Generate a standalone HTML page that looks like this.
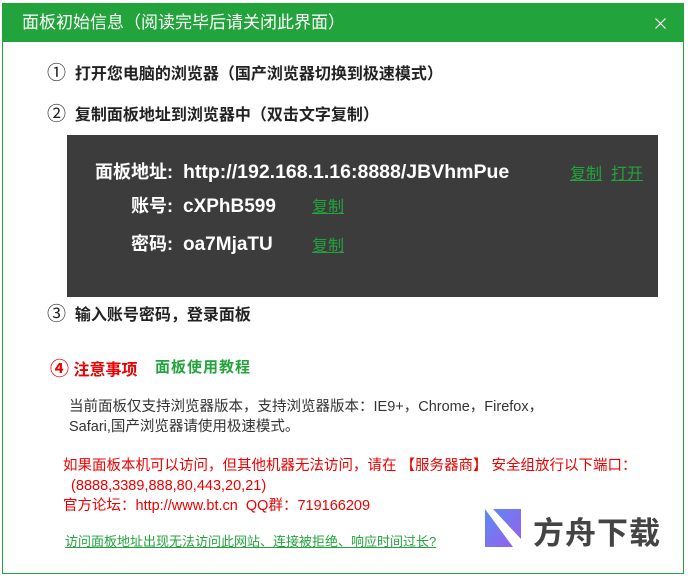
<!DOCTYPE html>
<html><head><meta charset="utf-8"><style>
body{margin:0;width:688px;height:578px;background:#fff;font-family:"Liberation Sans","Noto Sans CJK SC",sans-serif;position:relative;overflow:hidden}
.win{position:absolute;left:2px;top:3px;width:680px;height:569px;border:1px solid #22a33c;background:#fff}
.title{position:absolute;left:0;top:0;width:680px;height:38px;background:#22a33c;color:#fff;font-size:17px;line-height:38px}
.a{position:absolute;white-space:nowrap}
.b{font-weight:bold;font-size:16px;color:#222}
.panel{position:absolute;left:67px;top:135px;width:591px;height:162px;background:#3c3c3c}
.w{color:#fff;font-weight:bold;font-size:18px}
.g{color:#22a33c;text-decoration:underline;font-size:16px}
.r{color:#e00;font-size:14px}
.n{font-weight:normal;font-size:19px}
</style></head><body>
<div class="win">
<div class="title"><span style="position:absolute;left:19px">面板初始信息（阅读完毕后请关闭此界面）</span><svg style="position:absolute;left:652px;top:14px" width="11" height="11"><path d="M0.5 0.5L10.5 10.5M10.5 0.5L0.5 10.5" stroke="#fff" stroke-width="1.2"/></svg></div>
</div>
<div class="a b" style="left:47px;top:58px"><span class="n">①</span>&nbsp; 打开您电脑的浏览器（国产浏览器切换到极速模式）</div>
<div class="a b" style="left:47px;top:99px"><span class="n">②</span>&nbsp; 复制面板地址到浏览器中（双击文字复制）</div>
<div class="panel"></div>
<div class="a w" style="left:95px;top:158px">面板地址:&nbsp; <span style="font-size:19.5px">http://192.168.1.16:8888/JBVhmPue</span></div>
<div class="a g" style="left:570px;top:160px">复制</div>
<div class="a g" style="left:611px;top:160px">打开</div>
<div class="a w" style="left:131px;top:192px">账号:&nbsp; <span style="font-size:19px">cXPhB599</span></div>
<div class="a g" style="left:312px;top:193px">复制</div>
<div class="a w" style="left:131px;top:230px">密码:&nbsp; <span style="font-size:19px">oa7MjaTU</span></div>
<div class="a g" style="left:312px;top:232px">复制</div>
<div class="a b" style="left:47px;top:299px"><span class="n">③</span>&nbsp; 输入账号密码，登录面板</div>
<div class="a" style="left:50px;top:354px;font-size:16px;font-weight:bold;color:#e00"><span style="font-size:19px">④</span> 注意事项</div>
<div class="a" style="left:155px;top:356px;font-size:15px;font-weight:bold;color:#22a33c;letter-spacing:1px">面板使用教程</div>
<div class="a" style="left:69px;top:397px;font-size:14.5px;color:#333;line-height:20px">当前面板仅支持浏览器版本，支持浏览器版本：IE9+，Chrome，Firefox，<br>Safari,国产浏览器请使用极速模式。</div>
<div class="a r" style="left:63px;top:456px;line-height:20px;font-size:14.5px">如果面板本机可以访问，但其他机器无法访问，请在 【服务器商】 安全组放行以下端口：<br>&nbsp;&nbsp;(8888,3389,888,80,443,20,21)<br>官方论坛：http://www.bt.cn&nbsp; QQ群：719166209</div>
<div class="a" style="left:65px;top:531px;font-size:13px;color:#22a33c;text-decoration:underline">访问面板地址出现无法访问此网站、连接被拒绝、响应时间过长?</div>
<svg class="a" style="left:485px;top:509px" width="36" height="38"><defs><linearGradient id="lg" x1="0" y1="0" x2="1" y2="1"><stop offset="0" stop-color="#5a8cf0"/><stop offset="1" stop-color="#9b5cf0"/></linearGradient></defs><rect x="0" y="0" width="36" height="38" fill="url(#lg)"/><path d="M0 0L8 0L36 30L36 38L28 38Z" fill="#fff"/></svg>
<div class="a" style="left:533px;top:508px;font-size:31px;color:#444;font-weight:bold;letter-spacing:1px">方舟下载</div>
</body></html>
